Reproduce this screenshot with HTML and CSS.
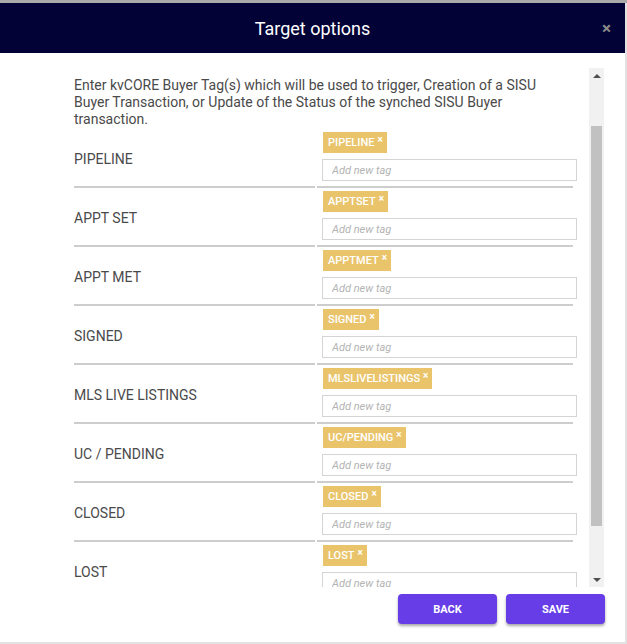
FILE: index.html
```html
<!DOCTYPE html>
<html lang="en">
<head>
<meta charset="utf-8">
<title>Target options</title>
<link rel="stylesheet" href="styles.css">
</head>
<body>
<div class="page">
  <div class="modal">
    <header class="modal-header">
      <span class="spacer"></span>
      <h1 class="title">Target options</h1>
      <span class="close">&times;</span>
    </header>
    <div class="modal-body">
      <div class="scroll-content">
        <p class="desc">Enter kvCORE Buyer Tag(s) which will be used to trigger, Creation of a SISU<br>Buyer Transaction, or Update of the Status of the synched SISU Buyer<br>transaction.</p>
        <div class="rows">
          <div class="row">
            <div class="label">PIPELINE</div>
            <div class="field"><span class="chip">PIPELINE<span class="chip-x">&times;</span></span><input class="tag-input" placeholder="Add new tag"></div>
          </div>
          <div class="row">
            <div class="label">APPT SET</div>
            <div class="field"><span class="chip">APPTSET<span class="chip-x">&times;</span></span><input class="tag-input" placeholder="Add new tag"></div>
          </div>
          <div class="row">
            <div class="label">APPT MET</div>
            <div class="field"><span class="chip">APPTMET<span class="chip-x">&times;</span></span><input class="tag-input" placeholder="Add new tag"></div>
          </div>
          <div class="row">
            <div class="label">SIGNED</div>
            <div class="field"><span class="chip">SIGNED<span class="chip-x">&times;</span></span><input class="tag-input" placeholder="Add new tag"></div>
          </div>
          <div class="row">
            <div class="label">MLS LIVE LISTINGS</div>
            <div class="field"><span class="chip">MLSLIVELISTINGS<span class="chip-x">&times;</span></span><input class="tag-input" placeholder="Add new tag"></div>
          </div>
          <div class="row">
            <div class="label">UC / PENDING</div>
            <div class="field"><span class="chip">UC/PENDING<span class="chip-x">&times;</span></span><input class="tag-input" placeholder="Add new tag"></div>
          </div>
          <div class="row">
            <div class="label">CLOSED</div>
            <div class="field"><span class="chip">CLOSED<span class="chip-x">&times;</span></span><input class="tag-input" placeholder="Add new tag"></div>
          </div>
          <div class="row">
            <div class="label">LOST</div>
            <div class="field"><span class="chip">LOST<span class="chip-x">&times;</span></span><input class="tag-input" placeholder="Add new tag"></div>
          </div>
        </div>
      </div>
      <div class="scrollbar">
        <div class="sb-btn"><span class="arrow-up"></span></div>
        <div class="sb-gap"></div>
        <div class="sb-thumb"></div>
        <div class="sb-fill"></div>
        <div class="sb-btn"><span class="arrow-down"></span></div>
      </div>
    </div>
    <footer class="modal-footer">
      <button class="btn">BACK</button>
      <button class="btn">SAVE</button>
    </footer>
  </div>
</div>
</body>
</html>
```

FILE: styles.css
```css
* { box-sizing: border-box; }

html, body {
  margin: 0;
  padding: 0;
}

body {
  font-family: Roboto, "Liberation Sans", Arial, sans-serif;
  background: #e2e2e2;
  width: 627px;
  height: 644px;
  overflow: hidden;
}

.page {
  border-top: 3px solid #a9a9a9;
  padding: 0 2px 2px 0;
  background: #e2e2e2;
}

.modal {
  width: 625px;
  height: 639px;
  background: #ffffff;
  display: flex;
  flex-direction: column;
}

.modal-header {
  height: 50px;
  background: #020236;
  display: grid;
  grid-template-columns: 1fr auto 1fr;
  align-items: center;
}

.title {
  margin: 0;
  font-size: 18px;
  font-weight: 400;
  color: #ffffff;
}

.close {
  justify-self: end;
  padding-right: 14px;
  color: #8a8a8a;
  font-size: 17px;
  font-weight: 700;
  line-height: 1;
}

.modal-body {
  display: flex;
  height: 519px;
  margin: 15px 21px 0 0;
}

.scroll-content {
  flex: 1;
  overflow: hidden;
  padding: 9px 0 0 74px;
}

.desc {
  margin: 0 0 1px 0;
  font-size: 14px;
  line-height: 17px;
  color: #4a4a4a;
  white-space: nowrap;
}

.rows {
  display: flex;
  flex-direction: column;
}

.row {
  display: grid;
  grid-template-columns: 241px 256px;
  column-gap: 2px;
}

.label {
  display: flex;
  align-items: center;
  padding-top: 2px;
  font-size: 14px;
  color: #4a4a4a;
  border-bottom: 2px solid #cdcdcd;
}

.field {
  display: flex;
  flex-direction: column;
  align-items: flex-start;
  padding: 3px 0 5px 0;
  border-bottom: 2px solid #cdcdcd;
}

.chip {
  display: flex;
  align-items: center;
  height: 21px;
  margin-left: 6px;
  padding: 0 4px 0 5px;
  background: #e9c46b;
  color: #ffffff;
  font-size: 11px;
  font-weight: 500;
}

.chip-x {
  align-self: flex-start;
  margin-top: 3px;
  margin-left: 3px;
  font-size: 10px;
  font-weight: 700;
  line-height: 10px;
}

.tag-input {
  display: block;
  flex: none;
  width: 255px;
  height: 22px;
  margin: 6px 0 0 5px;
  padding: 0 0 0 9px;
  border: 1px solid #d4d4d4;
  border-radius: 0;
  font-family: Roboto, "Liberation Sans", Arial, sans-serif;
  font-size: 11px;
  outline: none;
  background: #fff;
}

.tag-input::placeholder {
  color: #b3b3b3;
  font-style: italic;
}

.scrollbar {
  width: 15px;
  margin-left: 12px;
  background: #f1f1f1;
  display: flex;
  flex-direction: column;
  align-items: center;
}

.sb-btn {
  width: 15px;
  height: 15px;
  display: flex;
  align-items: center;
  justify-content: center;
}

.arrow-up {
  width: 0;
  height: 0;
  border-left: 4px solid transparent;
  border-right: 4px solid transparent;
  border-bottom: 4px solid #505050;
}

.arrow-down {
  width: 0;
  height: 0;
  border-left: 4px solid transparent;
  border-right: 4px solid transparent;
  border-top: 4px solid #505050;
}

.sb-gap {
  height: 43px;
}

.sb-thumb {
  width: 11px;
  height: 400px;
  background: #c1c1c1;
}

.sb-fill {
  flex: 1;
}

.modal-footer {
  display: flex;
  justify-content: flex-end;
  gap: 9px;
  padding: 7px 20px 0 0;
}

.btn {
  width: 99px;
  height: 30px;
  border: 0;
  border-radius: 4px;
  background: #673de8;
  color: #ffffff;
  font-family: Roboto, "Liberation Sans", Arial, sans-serif;
  font-size: 11px;
  font-weight: 700;
  box-shadow: 0 2px 3px rgba(0, 0, 0, 0.35);
  cursor: pointer;
}
```
